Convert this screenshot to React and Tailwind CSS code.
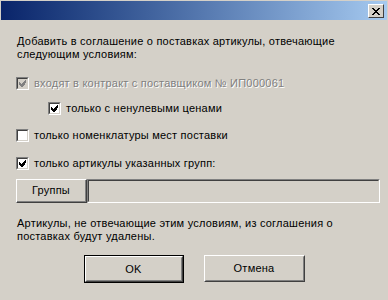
const Check = ({ color = "#000" }) => (
  <svg width="7" height="7" viewBox="0 0 7 7" shapeRendering="crispEdges">
    <path
      fill={color}
      d="M6 0h1v3h-1zM5 1h1v4h-1zM4 2h1v4h-1zM3 3h1v4h-1zM0 2h1v3h-1zM1 3h1v3h-1zM2 4h1v3h-1z"
    />
  </svg>
);

const CheckBox = ({ checked, disabled }) => (
  <div className="w-[13px] h-[13px] shrink-0 border border-t-[#808080] border-l-[#808080] border-b-white border-r-white">
    <div
      className={`w-full h-full flex items-center justify-center border border-t-[#404040] border-l-[#404040] border-b-[#d4d0c8] border-r-[#d4d0c8] ${
        disabled ? "bg-[#d4d0c8]" : "bg-white"
      }`}
    >
      {checked && <Check color={disabled ? "#808080" : "#000"} />}
    </div>
  </div>
);

const Row = ({ checked, disabled, label, className = "" }) => (
  <div className={`flex items-center h-[13px] gap-[5px] ${className}`}>
    <CheckBox checked={checked} disabled={disabled} />
    <span
      className={
        disabled
          ? "text-[#808080] [text-shadow:1px_1px_0_#ffffff]"
          : "text-black"
      }
    >
      {label}
    </span>
  </div>
);

const Button = ({ children, isDefault, className = "" }) => (
  <div className={`${isDefault ? "border border-black" : ""} ${className}`}>
    <div className="w-full h-full border border-t-white border-l-white border-b-[#404040] border-r-[#404040]">
      <div className="w-full h-full flex items-center justify-center border border-t-[#d4d0c8] border-l-[#d4d0c8] border-b-[#808080] border-r-[#808080]">
        {children}
      </div>
    </div>
  </div>
);

export default function App() {
  return (
    <div
      className="w-[388px] h-[300px] bg-[#d4d0c8] pt-px flex flex-col text-[11px] leading-[13px] tracking-[0.22px] text-black"
      style={{ fontFamily: '"Liberation Sans", Arial, sans-serif' }}
    >
      <div className="h-[19px] mx-px flex items-start justify-end pr-[3px] pt-[3px] bg-gradient-to-r from-[#0a246a] to-[#a6caf0]">
        <div className="w-[16px] h-[14px] bg-[#d4d0c8] border border-t-white border-l-white border-b-[#404040] border-r-[#404040] flex items-center justify-center">
          <svg width="8" height="7" viewBox="0 0 8 7" shapeRendering="crispEdges">
            <path
              fill="#000"
              d="M0 0h2v1h-2zM6 0h2v1h-2zM1 1h2v1h-2zM5 1h2v1h-2zM2 2h4v1h-4zM3 3h2v1h-2zM2 4h4v1h-4zM1 5h2v1h-2zM5 5h2v1h-2zM0 6h2v1h-2zM6 6h2v1h-2z"
            />
          </svg>
        </div>
      </div>

      <div className="px-[16px] flex flex-col">
        <p className="mt-[15px] pl-px">
          Добавить в соглашение о поставках артикулы, отвечающие
          <br />
          следующим условиям:
        </p>

        <Row
          className="mt-[16px]"
          checked
          disabled
          label="входят в контракт с поставщиком № ИП000061"
        />
        <Row className="mt-[12px] ml-[32px]" checked label="только с ненулевыми ценами" />
        <Row className="mt-[14px]" label="только номенклатуры мест поставки" />
        <Row className="mt-[15px]" checked label="только артикулы указанных групп:" />

        <div className="mt-[9px] h-[24px] flex">
          <div className="w-[71px] h-full border-t border-l border-white border-b border-r border-b-[#404040] border-r-[#404040]">
            <div className="w-full h-full flex items-center justify-center border-b border-r border-[#808080]">
              Группы
            </div>
          </div>
          <div className="flex-1 h-full mr-[-8px] border border-t-[#808080] border-l-[#808080] border-b-white border-r-white">
            <div className="w-full h-full border border-t-[#404040] border-l-[#404040] border-b-[#d4d0c8] border-r-[#d4d0c8] bg-[#d4d0c8]" />
          </div>
        </div>

        <p className="mt-[14px] pl-px">
          Артикулы, не отвечающие этим условиям, из соглашения о
          <br />
          поставках будут удалены.
        </p>

        <div className="mt-[12px] flex justify-center gap-[20px]">
          <Button isDefault className="w-[100px] h-[28px]">
            OK
          </Button>
          <Button className="w-[101px] h-[27px]">Отмена</Button>
        </div>
      </div>
    </div>
  );
}
